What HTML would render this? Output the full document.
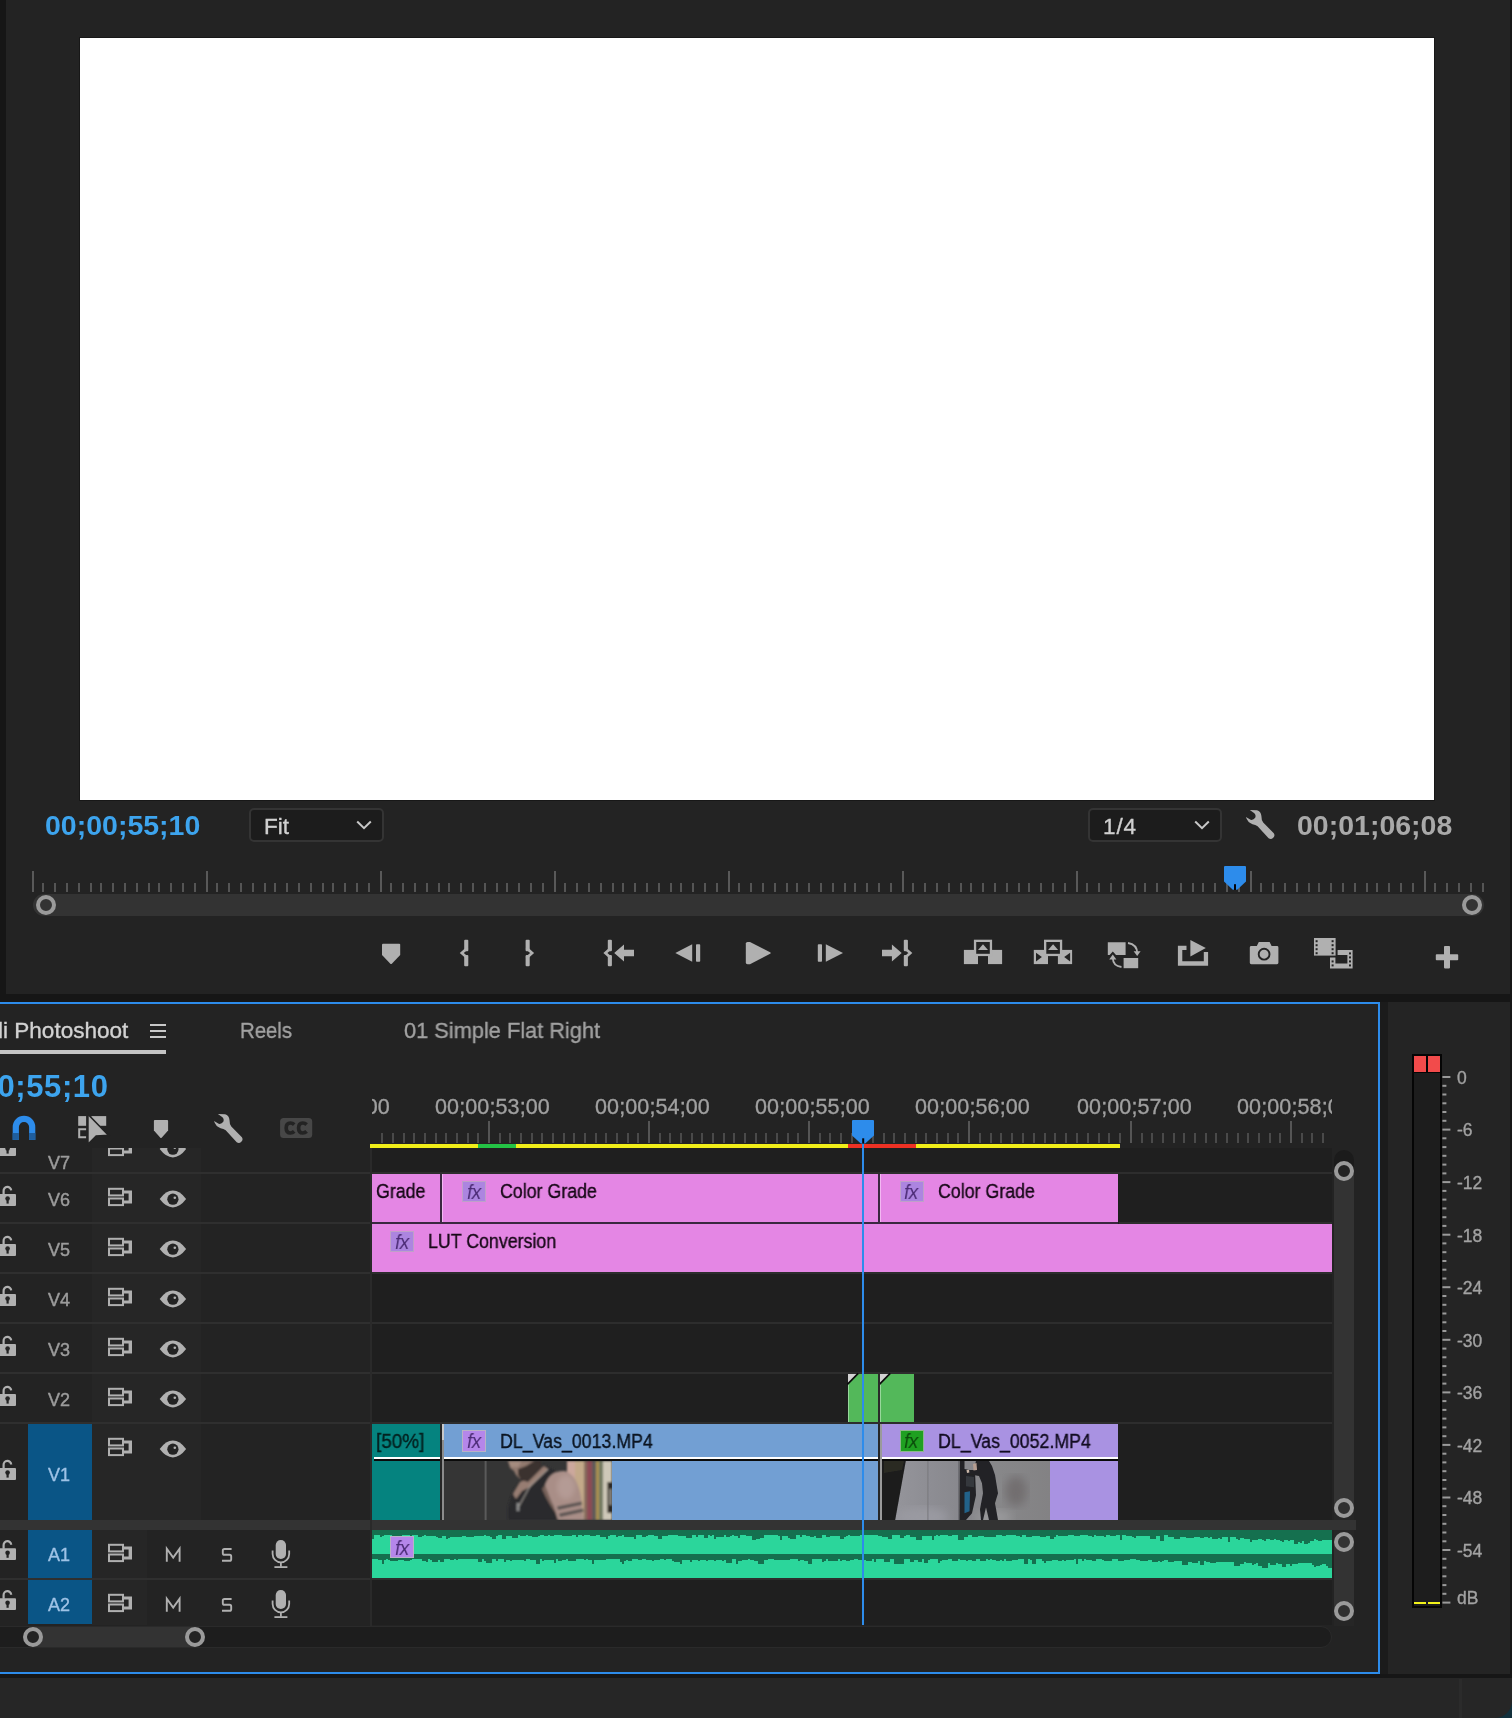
<!DOCTYPE html>
<html><head><meta charset="utf-8"><title>Premiere</title>
<style>
*{box-sizing:border-box;margin:0;padding:0}
html,body{width:1512px;height:1718px;overflow:hidden;background:#161616;font-family:"Liberation Sans",sans-serif;}
.a{position:absolute}
.t{position:absolute;white-space:nowrap;line-height:1;transform-origin:0 0;will-change:transform;-webkit-text-stroke-width:0.35px}
svg{position:absolute;overflow:visible}
</style></head><body>
<div class="a" style="left:0;top:0;width:1512px;height:1718px;background:#161616;overflow:hidden"><div class="a" style="left:1490px;top:1696px;width:22px;height:22px;background:#12303c"></div>

<div class="a" id="mon" style="left:6px;top:0;width:1504px;height:994px;background:#232323"></div>
<div class="a" style="left:80px;top:38px;width:1354px;height:762px;background:#fff;box-shadow:0 0 0 1px #171717"></div>
<div class="t" id="tcL" style="left:45px;top:811px;font-size:28.5px;color:#3da4ee;font-weight:bold;-webkit-text-stroke-width:0">00;00;55;10</div><div class="t" id="tcR" style="left:1297px;top:811px;font-size:28.5px;color:#a9a9a9;font-weight:bold;-webkit-text-stroke-width:0">00;01;06;08</div><div class="a" style="left:249.4px;top:808.4px;width:134.4px;height:33.6px;border:2px solid #343434;border-radius:5px;background:#1c1c1c"></div><div class="t" style="left:264px;top:815.6px;font-size:22.5px;color:#d0d0d0;letter-spacing:0px">Fit</div><svg style="left:356.4px;top:820.2px" width="16" height="10"><path d="M1.2 1.5 L8 8.2 L14.8 1.5" fill="none" stroke="#c8c8c8" stroke-width="2"/></svg><div class="a" style="left:1088.4px;top:808.4px;width:133.4px;height:33.6px;border:2px solid #343434;border-radius:5px;background:#1c1c1c"></div><div class="t" style="left:1103px;top:815.6px;font-size:22.5px;color:#d0d0d0;letter-spacing:0.9px">1/4</div><svg style="left:1194.4px;top:820.2px" width="16" height="10"><path d="M1.2 1.5 L8 8.2 L14.8 1.5" fill="none" stroke="#c8c8c8" stroke-width="2"/></svg><svg style="left:0;top:0" width="1512" height="1000" shape-rendering="crispEdges"><rect x="32" y="871" width="2" height="21" fill="#595959"/><rect x="42" y="882.5" width="2" height="9.5" fill="#555"/><rect x="54" y="882.5" width="2" height="9.5" fill="#555"/><rect x="66" y="882.5" width="2" height="9.5" fill="#555"/><rect x="78" y="882.5" width="2" height="9.5" fill="#555"/><rect x="90" y="882.5" width="2" height="9.5" fill="#555"/><rect x="100" y="882.5" width="2" height="9.5" fill="#555"/><rect x="112" y="882.5" width="2" height="9.5" fill="#555"/><rect x="124" y="882.5" width="2" height="9.5" fill="#555"/><rect x="136" y="882.5" width="2" height="9.5" fill="#555"/><rect x="148" y="882.5" width="2" height="9.5" fill="#555"/><rect x="158" y="882.5" width="2" height="9.5" fill="#555"/><rect x="170" y="882.5" width="2" height="9.5" fill="#555"/><rect x="182" y="882.5" width="2" height="9.5" fill="#555"/><rect x="194" y="882.5" width="2" height="9.5" fill="#555"/><rect x="206" y="871" width="2" height="21" fill="#595959"/><rect x="216" y="882.5" width="2" height="9.5" fill="#555"/><rect x="228" y="882.5" width="2" height="9.5" fill="#555"/><rect x="240" y="882.5" width="2" height="9.5" fill="#555"/><rect x="252" y="882.5" width="2" height="9.5" fill="#555"/><rect x="264" y="882.5" width="2" height="9.5" fill="#555"/><rect x="274" y="882.5" width="2" height="9.5" fill="#555"/><rect x="286" y="882.5" width="2" height="9.5" fill="#555"/><rect x="298" y="882.5" width="2" height="9.5" fill="#555"/><rect x="310" y="882.5" width="2" height="9.5" fill="#555"/><rect x="322" y="882.5" width="2" height="9.5" fill="#555"/><rect x="332" y="882.5" width="2" height="9.5" fill="#555"/><rect x="344" y="882.5" width="2" height="9.5" fill="#555"/><rect x="356" y="882.5" width="2" height="9.5" fill="#555"/><rect x="368" y="882.5" width="2" height="9.5" fill="#555"/><rect x="380" y="871" width="2" height="21" fill="#595959"/><rect x="390" y="882.5" width="2" height="9.5" fill="#555"/><rect x="402" y="882.5" width="2" height="9.5" fill="#555"/><rect x="414" y="882.5" width="2" height="9.5" fill="#555"/><rect x="426" y="882.5" width="2" height="9.5" fill="#555"/><rect x="438" y="882.5" width="2" height="9.5" fill="#555"/><rect x="448" y="882.5" width="2" height="9.5" fill="#555"/><rect x="460" y="882.5" width="2" height="9.5" fill="#555"/><rect x="472" y="882.5" width="2" height="9.5" fill="#555"/><rect x="484" y="882.5" width="2" height="9.5" fill="#555"/><rect x="496" y="882.5" width="2" height="9.5" fill="#555"/><rect x="506" y="882.5" width="2" height="9.5" fill="#555"/><rect x="518" y="882.5" width="2" height="9.5" fill="#555"/><rect x="530" y="882.5" width="2" height="9.5" fill="#555"/><rect x="542" y="882.5" width="2" height="9.5" fill="#555"/><rect x="554" y="871" width="2" height="21" fill="#595959"/><rect x="564" y="882.5" width="2" height="9.5" fill="#555"/><rect x="576" y="882.5" width="2" height="9.5" fill="#555"/><rect x="588" y="882.5" width="2" height="9.5" fill="#555"/><rect x="600" y="882.5" width="2" height="9.5" fill="#555"/><rect x="612" y="882.5" width="2" height="9.5" fill="#555"/><rect x="622" y="882.5" width="2" height="9.5" fill="#555"/><rect x="634" y="882.5" width="2" height="9.5" fill="#555"/><rect x="646" y="882.5" width="2" height="9.5" fill="#555"/><rect x="658" y="882.5" width="2" height="9.5" fill="#555"/><rect x="670" y="882.5" width="2" height="9.5" fill="#555"/><rect x="680" y="882.5" width="2" height="9.5" fill="#555"/><rect x="692" y="882.5" width="2" height="9.5" fill="#555"/><rect x="704" y="882.5" width="2" height="9.5" fill="#555"/><rect x="716" y="882.5" width="2" height="9.5" fill="#555"/><rect x="728" y="871" width="2" height="21" fill="#595959"/><rect x="738" y="882.5" width="2" height="9.5" fill="#555"/><rect x="750" y="882.5" width="2" height="9.5" fill="#555"/><rect x="762" y="882.5" width="2" height="9.5" fill="#555"/><rect x="774" y="882.5" width="2" height="9.5" fill="#555"/><rect x="786" y="882.5" width="2" height="9.5" fill="#555"/><rect x="796" y="882.5" width="2" height="9.5" fill="#555"/><rect x="808" y="882.5" width="2" height="9.5" fill="#555"/><rect x="820" y="882.5" width="2" height="9.5" fill="#555"/><rect x="832" y="882.5" width="2" height="9.5" fill="#555"/><rect x="844" y="882.5" width="2" height="9.5" fill="#555"/><rect x="854" y="882.5" width="2" height="9.5" fill="#555"/><rect x="866" y="882.5" width="2" height="9.5" fill="#555"/><rect x="878" y="882.5" width="2" height="9.5" fill="#555"/><rect x="890" y="882.5" width="2" height="9.5" fill="#555"/><rect x="902" y="871" width="2" height="21" fill="#595959"/><rect x="912" y="882.5" width="2" height="9.5" fill="#555"/><rect x="924" y="882.5" width="2" height="9.5" fill="#555"/><rect x="936" y="882.5" width="2" height="9.5" fill="#555"/><rect x="948" y="882.5" width="2" height="9.5" fill="#555"/><rect x="960" y="882.5" width="2" height="9.5" fill="#555"/><rect x="970" y="882.5" width="2" height="9.5" fill="#555"/><rect x="982" y="882.5" width="2" height="9.5" fill="#555"/><rect x="994" y="882.5" width="2" height="9.5" fill="#555"/><rect x="1006" y="882.5" width="2" height="9.5" fill="#555"/><rect x="1018" y="882.5" width="2" height="9.5" fill="#555"/><rect x="1028" y="882.5" width="2" height="9.5" fill="#555"/><rect x="1040" y="882.5" width="2" height="9.5" fill="#555"/><rect x="1052" y="882.5" width="2" height="9.5" fill="#555"/><rect x="1064" y="882.5" width="2" height="9.5" fill="#555"/><rect x="1076" y="871" width="2" height="21" fill="#595959"/><rect x="1086" y="882.5" width="2" height="9.5" fill="#555"/><rect x="1098" y="882.5" width="2" height="9.5" fill="#555"/><rect x="1110" y="882.5" width="2" height="9.5" fill="#555"/><rect x="1122" y="882.5" width="2" height="9.5" fill="#555"/><rect x="1134" y="882.5" width="2" height="9.5" fill="#555"/><rect x="1144" y="882.5" width="2" height="9.5" fill="#555"/><rect x="1156" y="882.5" width="2" height="9.5" fill="#555"/><rect x="1168" y="882.5" width="2" height="9.5" fill="#555"/><rect x="1180" y="882.5" width="2" height="9.5" fill="#555"/><rect x="1192" y="882.5" width="2" height="9.5" fill="#555"/><rect x="1202" y="882.5" width="2" height="9.5" fill="#555"/><rect x="1214" y="882.5" width="2" height="9.5" fill="#555"/><rect x="1226" y="882.5" width="2" height="9.5" fill="#555"/><rect x="1238" y="882.5" width="2" height="9.5" fill="#555"/><rect x="1250" y="871" width="2" height="21" fill="#595959"/><rect x="1260" y="882.5" width="2" height="9.5" fill="#555"/><rect x="1272" y="882.5" width="2" height="9.5" fill="#555"/><rect x="1284" y="882.5" width="2" height="9.5" fill="#555"/><rect x="1296" y="882.5" width="2" height="9.5" fill="#555"/><rect x="1308" y="882.5" width="2" height="9.5" fill="#555"/><rect x="1318" y="882.5" width="2" height="9.5" fill="#555"/><rect x="1330" y="882.5" width="2" height="9.5" fill="#555"/><rect x="1342" y="882.5" width="2" height="9.5" fill="#555"/><rect x="1354" y="882.5" width="2" height="9.5" fill="#555"/><rect x="1366" y="882.5" width="2" height="9.5" fill="#555"/><rect x="1376" y="882.5" width="2" height="9.5" fill="#555"/><rect x="1388" y="882.5" width="2" height="9.5" fill="#555"/><rect x="1400" y="882.5" width="2" height="9.5" fill="#555"/><rect x="1412" y="882.5" width="2" height="9.5" fill="#555"/><rect x="1424" y="871" width="2" height="21" fill="#595959"/><rect x="1434" y="882.5" width="2" height="9.5" fill="#555"/><rect x="1446" y="882.5" width="2" height="9.5" fill="#555"/><rect x="1458" y="882.5" width="2" height="9.5" fill="#555"/><rect x="1470" y="882.5" width="2" height="9.5" fill="#555"/><rect x="1482" y="882.5" width="2" height="9.5" fill="#555"/></svg><div class="a" style="left:33px;top:894px;width:1451px;height:22px;background:#333;border-radius:11px 11px 11px 11px"></div><div class="a" style="left:36px;top:895.0px;width:20.4px;height:20.4px;border-radius:50%;border:4.4px solid #9a9a9a;background:#333"></div><div class="a" style="left:1461.5px;top:895.0px;width:20.4px;height:20.4px;border-radius:50%;border:4.4px solid #9a9a9a;background:#333"></div><svg style="left:1224px;top:866px" width="24" height="28"><path d="M0 1 Q0 0 1 0 H21 Q22 0 22 1 V15.6 L13.2 23.8 H8.8 L0 15.6 Z" fill="#2d8ceb"/><rect x="10" y="18.2" width="2" height="5.8" fill="#05050a"/></svg><svg style="left:0;top:0" width="1512" height="1000"><g fill="#b0b0b0" stroke="none"><path d="M383 943.8 H399.2 Q400.2 943.8 400.2 944.8 V955 L391.6 963.9 H390.6 L382 955 V944.8 Q382 943.8 383 943.8 Z"/><rect x="464.2" y="939.8" width="4.1" height="11.4" rx="1"/><rect x="464.2" y="955" width="4.1" height="11.2" rx="1"/><path d="M467.4 948 L461.79999999999995 953 L467.4 958" fill="none" stroke="#b0b0b0" stroke-width="2.7"/><rect x="525.6" y="939.8" width="4.1" height="11.4" rx="1"/><rect x="525.6" y="955" width="4.1" height="11.2" rx="1"/><path d="M526.5 948 L532.1 953 L526.5 958" fill="none" stroke="#b0b0b0" stroke-width="2.7"/><rect x="607.8" y="939.8" width="4.1" height="11.4" rx="1"/><rect x="607.8" y="955" width="4.1" height="11.2" rx="1"/><path d="M611 948 L605.4 953 L611 958" fill="none" stroke="#b0b0b0" stroke-width="2.7"/><path d="M614.2 953 L624 944.4 V949.8 H634 V956.2 H624 V961.6 Z"/><path d="M675.3 953 L692.2 944.3 V961.8 Z"/><rect x="696" y="944.3" width="4.2" height="17.5" rx="0.8"/><path d="M747.5 942 Q745.8 942 745.8 943.5 V962.6 Q745.8 964.2 747.5 964.2 H750 L770.6 953.6 V952.6 L750 942 Z"/><rect x="817.8" y="944.3" width="4.2" height="17.5" rx="0.8"/><path d="M825.8 944.3 L843 953 L825.8 961.8 Z"/><path d="M901.7 953 L891.9 944.4 V949.8 H882 V956.2 H891.9 V961.6 Z"/><rect x="903.8000000000001" y="939.8" width="4.1" height="11.4" rx="1"/><rect x="903.8000000000001" y="955" width="4.1" height="11.2" rx="1"/><path d="M904.7 948 L910.3000000000001 953 L904.7 958" fill="none" stroke="#b0b0b0" stroke-width="2.7"/><rect x="963.9" y="949.9" width="14.1" height="14.2"/><rect x="988" y="949.9" width="14.1" height="14.2"/><rect x="975.05" y="940.85" width="15.9" height="14.1" fill="#232323" stroke="#b0b0b0" stroke-width="2.3"/><path d="M983 944.3 L988 950 H978 Z"/><rect x="1033.8" y="949.9" width="14.2" height="14.2"/><rect x="1057.9" y="949.9" width="14.2" height="14.2"/><path d="M1036 952.8 L1041.9 957.1 L1036 961.4 Z" fill="#232323"/><path d="M1070.1 952.8 L1064.2 957.1 L1070.1 961.4 Z" fill="#232323"/><rect x="1045.15" y="940.85" width="15.9" height="14.1" fill="#232323" stroke="#b0b0b0" stroke-width="2.3"/><path d="M1053.1 944.3 L1058.1 950 H1048.1 Z"/><path d="M1107.8 942.2 H1125.6 V955 H1116 L1112.8 951.5 L1109.6 955 H1107.8 Z"/><rect x="1123.6" y="958" width="14.6" height="10.2"/><path d="M1128 943 Q1137 944.5 1137.2 953" fill="none" stroke="#b0b0b0" stroke-width="1.8"/><path d="M1133.6 951.2 L1137.2 956 L1140.6 951.2 Z"/><path d="M1121.5 967 Q1113 966 1112.8 958" fill="none" stroke="#b0b0b0" stroke-width="1.8"/><path d="M1109.2 959.6 L1112.8 954.6 L1116.4 959.6 Z"/><path d="M1177.9 945.7 H1186.5 V950.1 H1182.3 V961.3 H1203.8 V952 H1208.1 V965.8 H1177.9 Z"/><path d="M1190.4 940 L1205.8 948 L1190.4 956.4 Z"/><path d="M1251.3 946 H1256.8 L1258.8 942 H1269.6 L1271.6 946 H1277 Q1278.4 946 1278.4 947.4 V962.8 Q1278.4 964.2 1277 964.2 H1251.3 Q1249.8 964.2 1249.8 962.8 V947.4 Q1249.8 946 1251.3 946 Z"/><circle cx="1264.1" cy="954.2" r="5.4" fill="#b0b0b0" stroke="#232323" stroke-width="1.9"/><rect x="1314" y="938" width="21.6" height="17.6"/><g fill="#232323"><rect x="1315.6" y="940.2" width="2" height="2"/><rect x="1331.6" y="940.2" width="2" height="2"/><rect x="1315.6" y="944.2" width="2" height="2"/><rect x="1331.6" y="944.2" width="2" height="2"/><rect x="1315.6" y="948.2" width="2" height="2"/><rect x="1331.6" y="948.2" width="2" height="2"/><rect x="1315.6" y="952.2" width="2" height="2"/><rect x="1331.6" y="952.2" width="2" height="2"/></g><path d="M1337.6 950 H1352.6 V968.4 H1330 V957.6 H1335.4 V963.4 H1347.4 V955 H1337.6 Z"/><g fill="#232323"><rect x="1349" y="952.4" width="2" height="2"/><rect x="1349" y="956.4" width="2" height="2"/><rect x="1349" y="960.4" width="2" height="2"/><rect x="1349" y="964.4" width="2" height="2"/><rect x="1331.6" y="960.4" width="2" height="2"/><rect x="1331.6" y="964.4" width="2" height="2"/></g><rect x="1435.8" y="954.2" width="22.4" height="6" rx="0.8"/><rect x="1444" y="946" width="6" height="22.4" rx="0.8"/></g></svg><svg style="left:0;top:0" width="1512" height="900"><path d="M1249.8 810.1 L1257 810.2 Q1261 811.5 1261.4 816 Q1261.4 820.5 1263.2 822.4 L1273.8 833.2 Q1275.4 835.6 1273.2 837.8 Q1271 840 1268.6 838.2 L1257.6 826.2 Q1255.5 824.6 1252.5 824.3 Q1247.5 822.5 1245.9 817.1 L1250.6 819.8 Q1253.5 820.3 1255.2 817.8 Q1256.4 815 1254 813 Z" fill="#b0b0b0"/></svg><div class="a" style="left:0;top:1002px;width:1380px;height:672px;background:#232323;border:2px solid #2d8ceb;border-left:none"></div><div class="a" style="left:1380px;top:1002px;width:8px;height:672px;background:#1b1b1b"></div><div class="a" style="left:1388px;top:1002px;width:122px;height:672px;background:#242424"></div><div class="a" style="left:0;top:1678px;width:1512px;height:40px;background:#262626;border-bottom-right-radius:17px"></div><div class="a" style="left:1459.2px;top:1679px;width:2.4px;height:39px;background:#2b2b2b"></div><div class="t" style="left:-2px;top:1019.8px;font-size:22px;color:#d2d2d2;transform:scaleX(1.025)">li Photoshoot</div><div class="a" style="left:0;top:1050px;width:166px;height:4px;background:#c4c4c4"></div><div class="a" style="left:150px;top:1024px;width:16px;height:2px;background:#c8c8c8"></div><div class="a" style="left:150px;top:1030px;width:16px;height:2px;background:#c8c8c8"></div><div class="a" style="left:150px;top:1036px;width:16px;height:2px;background:#c8c8c8"></div><div class="t" style="left:240px;top:1019.8px;font-size:22px;color:#a2a2a2;transform:scaleX(0.925)">Reels</div><div class="t" style="left:404px;top:1019.8px;font-size:22px;color:#a2a2a2;transform:scaleX(0.99)">01 Simple Flat Right</div><div class="t" style="left:-67px;top:1071.2px;font-size:31px;letter-spacing:0.6px;color:#3da4ee;font-weight:bold;-webkit-text-stroke-width:0">00;00;55;10</div><svg style="left:0;top:0" width="400" height="1718"><path d="M12.7 1139.9 V1127 A11.3 11.3 0 0 1 35.3 1127 V1139.9 H29.1 V1127 A5.1 5.1 0 0 0 18.9 1127 V1139.9 Z" fill="#2d8ceb"/><rect x="12.7" y="1133" width="6.2" height="6.9" fill="#1f5e9e"/><rect x="29.1" y="1133" width="6.2" height="6.9" fill="#1f5e9e"/><rect x="78.2" y="1116.1" width="7.9" height="9.7" fill="#b0b0b0"/><path d="M86.1 1129.2 H79.2 V1137.2 H86.1" fill="none" stroke="#b0b0b0" stroke-width="2"/><rect x="91.3" y="1116.1" width="14.9" height="9.7" fill="#b0b0b0"/><path d="M87.9 1114.3 V1144.4 L96.2 1136 L108.4 1135.2 Z" fill="#b0b0b0" stroke="#232323" stroke-width="1.6"/><rect x="84" y="1112" width="3.2" height="32" fill="#232323" opacity="0"/><path d="M154.8 1120 H167.2 Q168.1 1120 168.1 1121 V1130.5 L161.4 1138 H160.6 L153.9 1130.5 V1121 Q153.9 1120 154.8 1120 Z" fill="#b0b0b0"/><path d="M1249.8 810.1 L1257 810.2 Q1261 811.5 1261.4 816 Q1261.4 820.5 1263.2 822.4 L1273.8 833.2 Q1275.4 835.6 1273.2 837.8 Q1271 840 1268.6 838.2 L1257.6 826.2 Q1255.5 824.6 1252.5 824.3 Q1247.5 822.5 1245.9 817.1 L1250.6 819.8 Q1253.5 820.3 1255.2 817.8 Q1256.4 815 1254 813 Z" fill="#b0b0b0" transform="translate(-1031.9 304)"/><rect x="280.1" y="1117.9" width="32.1" height="20.1" rx="3.5" fill="#474747"/><path d="M294.2 1124.6 Q292.6 1123 290.4 1123 Q286.2 1123 286.2 1128 Q286.2 1133 290.4 1133 Q292.6 1133 294.2 1131.4" fill="none" stroke="#232323" stroke-width="3.7"/><path d="M306.6 1124.6 Q305 1123 302.8 1123 Q298.6 1123 298.6 1128 Q298.6 1133 302.8 1133 Q305 1133 306.6 1131.4" fill="none" stroke="#232323" stroke-width="3.7"/></svg><div class="a" style="left:92px;top:1148px;width:109px;height:373px;background:#262626"></div><div class="a" style="left:92px;top:1530px;width:55px;height:95px;background:#262626"></div><div class="a" style="left:0;top:1148px;width:372px;height:24px;overflow:hidden"><svg style="left:0;top:-1148px" width="372" height="1718"><rect x="-1" y="1144.0" width="17" height="11.9" rx="1" fill="#b0b0b0"/><path d="M3.6 1144.5 V1141.0 A3.8 3.8 0 0 1 11.2 1140.4" fill="none" stroke="#b0b0b0" stroke-width="2.2"/><circle cx="7.6" cy="1148.5" r="2.3" fill="#232323"/><rect x="6.5" y="1149.0" width="2.2" height="4.6" fill="#232323"/><rect x="109" y="1138.8" width="14" height="6.6" fill="none" stroke="#b0b0b0" stroke-width="2"/><rect x="109" y="1148.5" width="14" height="6.6" fill="none" stroke="#b0b0b0" stroke-width="2"/><path d="M124 1140.4 H132 V1153.4 H124 V1150.4 H128.6 V1143.4 H124 Z" fill="#b0b0b0"/><path d="M159.7 1149.0 Q166 1140.6 172.9 1140.6 Q179.8 1140.6 186.1 1149.0 Q179.8 1157.4 172.9 1157.4 Q166 1157.4 159.7 1149.0 Z" fill="#b0b0b0"/><circle cx="172.9" cy="1149.2" r="5.6" fill="#232323"/><circle cx="174.8" cy="1147.8" r="1.3" fill="#b0b0b0"/></svg><div class="t" style="left:48px;top:5.7px;font-size:18px;color:#9c9c9c;-webkit-text-stroke-width:0.45px">V7</div></div><div class="a" style="left:0;top:1172px;width:372px;height:2px;background:#2f2f2f"></div><div class="a" style="left:0;top:1222px;width:372px;height:2px;background:#2f2f2f"></div><div class="a" style="left:0;top:1272px;width:372px;height:2px;background:#2f2f2f"></div><div class="a" style="left:0;top:1322px;width:372px;height:2px;background:#2f2f2f"></div><div class="a" style="left:0;top:1372px;width:372px;height:2px;background:#2f2f2f"></div><div class="a" style="left:0;top:1422px;width:372px;height:2px;background:#2f2f2f"></div><svg style="left:0;top:0" width="372" height="1718"><rect x="-1" y="1194.0" width="17" height="11.9" rx="1" fill="#b0b0b0"/><path d="M3.6 1194.5 V1191.0 A3.8 3.8 0 0 1 11.2 1190.4" fill="none" stroke="#b0b0b0" stroke-width="2.2"/><circle cx="7.6" cy="1198.5" r="2.3" fill="#232323"/><rect x="6.5" y="1199.0" width="2.2" height="4.6" fill="#232323"/><rect x="109" y="1188.8" width="14" height="6.6" fill="none" stroke="#b0b0b0" stroke-width="2"/><rect x="109" y="1198.5" width="14" height="6.6" fill="none" stroke="#b0b0b0" stroke-width="2"/><path d="M124 1190.4 H132 V1203.4 H124 V1200.4 H128.6 V1193.4 H124 Z" fill="#b0b0b0"/><path d="M159.7 1199.0 Q166 1190.6 172.9 1190.6 Q179.8 1190.6 186.1 1199.0 Q179.8 1207.4 172.9 1207.4 Q166 1207.4 159.7 1199.0 Z" fill="#b0b0b0"/><circle cx="172.9" cy="1199.2" r="5.6" fill="#232323"/><circle cx="174.8" cy="1197.8" r="1.3" fill="#b0b0b0"/><rect x="-1" y="1244.0" width="17" height="11.9" rx="1" fill="#b0b0b0"/><path d="M3.6 1244.5 V1241.0 A3.8 3.8 0 0 1 11.2 1240.4" fill="none" stroke="#b0b0b0" stroke-width="2.2"/><circle cx="7.6" cy="1248.5" r="2.3" fill="#232323"/><rect x="6.5" y="1249.0" width="2.2" height="4.6" fill="#232323"/><rect x="109" y="1238.8" width="14" height="6.6" fill="none" stroke="#b0b0b0" stroke-width="2"/><rect x="109" y="1248.5" width="14" height="6.6" fill="none" stroke="#b0b0b0" stroke-width="2"/><path d="M124 1240.4 H132 V1253.4 H124 V1250.4 H128.6 V1243.4 H124 Z" fill="#b0b0b0"/><path d="M159.7 1249.0 Q166 1240.6 172.9 1240.6 Q179.8 1240.6 186.1 1249.0 Q179.8 1257.4 172.9 1257.4 Q166 1257.4 159.7 1249.0 Z" fill="#b0b0b0"/><circle cx="172.9" cy="1249.2" r="5.6" fill="#232323"/><circle cx="174.8" cy="1247.8" r="1.3" fill="#b0b0b0"/><rect x="-1" y="1294.0" width="17" height="11.9" rx="1" fill="#b0b0b0"/><path d="M3.6 1294.5 V1291.0 A3.8 3.8 0 0 1 11.2 1290.4" fill="none" stroke="#b0b0b0" stroke-width="2.2"/><circle cx="7.6" cy="1298.5" r="2.3" fill="#232323"/><rect x="6.5" y="1299.0" width="2.2" height="4.6" fill="#232323"/><rect x="109" y="1288.8" width="14" height="6.6" fill="none" stroke="#b0b0b0" stroke-width="2"/><rect x="109" y="1298.5" width="14" height="6.6" fill="none" stroke="#b0b0b0" stroke-width="2"/><path d="M124 1290.4 H132 V1303.4 H124 V1300.4 H128.6 V1293.4 H124 Z" fill="#b0b0b0"/><path d="M159.7 1299.0 Q166 1290.6 172.9 1290.6 Q179.8 1290.6 186.1 1299.0 Q179.8 1307.4 172.9 1307.4 Q166 1307.4 159.7 1299.0 Z" fill="#b0b0b0"/><circle cx="172.9" cy="1299.2" r="5.6" fill="#232323"/><circle cx="174.8" cy="1297.8" r="1.3" fill="#b0b0b0"/><rect x="-1" y="1344.0" width="17" height="11.9" rx="1" fill="#b0b0b0"/><path d="M3.6 1344.5 V1341.0 A3.8 3.8 0 0 1 11.2 1340.4" fill="none" stroke="#b0b0b0" stroke-width="2.2"/><circle cx="7.6" cy="1348.5" r="2.3" fill="#232323"/><rect x="6.5" y="1349.0" width="2.2" height="4.6" fill="#232323"/><rect x="109" y="1338.8" width="14" height="6.6" fill="none" stroke="#b0b0b0" stroke-width="2"/><rect x="109" y="1348.5" width="14" height="6.6" fill="none" stroke="#b0b0b0" stroke-width="2"/><path d="M124 1340.4 H132 V1353.4 H124 V1350.4 H128.6 V1343.4 H124 Z" fill="#b0b0b0"/><path d="M159.7 1349.0 Q166 1340.6 172.9 1340.6 Q179.8 1340.6 186.1 1349.0 Q179.8 1357.4 172.9 1357.4 Q166 1357.4 159.7 1349.0 Z" fill="#b0b0b0"/><circle cx="172.9" cy="1349.2" r="5.6" fill="#232323"/><circle cx="174.8" cy="1347.8" r="1.3" fill="#b0b0b0"/><rect x="-1" y="1394.0" width="17" height="11.9" rx="1" fill="#b0b0b0"/><path d="M3.6 1394.5 V1391.0 A3.8 3.8 0 0 1 11.2 1390.4" fill="none" stroke="#b0b0b0" stroke-width="2.2"/><circle cx="7.6" cy="1398.5" r="2.3" fill="#232323"/><rect x="6.5" y="1399.0" width="2.2" height="4.6" fill="#232323"/><rect x="109" y="1388.8" width="14" height="6.6" fill="none" stroke="#b0b0b0" stroke-width="2"/><rect x="109" y="1398.5" width="14" height="6.6" fill="none" stroke="#b0b0b0" stroke-width="2"/><path d="M124 1390.4 H132 V1403.4 H124 V1400.4 H128.6 V1393.4 H124 Z" fill="#b0b0b0"/><path d="M159.7 1399.0 Q166 1390.6 172.9 1390.6 Q179.8 1390.6 186.1 1399.0 Q179.8 1407.4 172.9 1407.4 Q166 1407.4 159.7 1399.0 Z" fill="#b0b0b0"/><circle cx="172.9" cy="1399.2" r="5.6" fill="#232323"/><circle cx="174.8" cy="1397.8" r="1.3" fill="#b0b0b0"/><rect x="-1" y="1468.0" width="17" height="11.9" rx="1" fill="#b0b0b0"/><path d="M3.6 1468.5 V1465.0 A3.8 3.8 0 0 1 11.2 1464.5" fill="none" stroke="#b0b0b0" stroke-width="2.2"/><circle cx="7.6" cy="1472.6" r="2.3" fill="#232323"/><rect x="6.5" y="1473.0" width="2.2" height="4.6" fill="#232323"/><rect x="109" y="1438.8" width="14" height="6.6" fill="none" stroke="#b0b0b0" stroke-width="2"/><rect x="109" y="1448.5" width="14" height="6.6" fill="none" stroke="#b0b0b0" stroke-width="2"/><path d="M124 1440.4 H132 V1453.4 H124 V1450.4 H128.6 V1443.4 H124 Z" fill="#b0b0b0"/><path d="M159.7 1449.0 Q166 1440.6 172.9 1440.6 Q179.8 1440.6 186.1 1449.0 Q179.8 1457.4 172.9 1457.4 Q166 1457.4 159.7 1449.0 Z" fill="#b0b0b0"/><circle cx="172.9" cy="1449.2" r="5.6" fill="#232323"/><circle cx="174.8" cy="1447.8" r="1.3" fill="#b0b0b0"/><rect x="-1" y="1548.2" width="17" height="11.9" rx="1" fill="#b0b0b0"/><path d="M3.6 1548.8 V1545.2 A3.8 3.8 0 0 1 11.2 1544.7" fill="none" stroke="#b0b0b0" stroke-width="2.2"/><circle cx="7.6" cy="1552.8" r="2.3" fill="#232323"/><rect x="6.5" y="1553.2" width="2.2" height="4.6" fill="#232323"/><rect x="109" y="1544.8" width="14" height="6.6" fill="none" stroke="#b0b0b0" stroke-width="2"/><rect x="109" y="1554.5" width="14" height="6.6" fill="none" stroke="#b0b0b0" stroke-width="2"/><path d="M124 1546.4 H132 V1559.4 H124 V1556.4 H128.6 V1549.4 H124 Z" fill="#b0b0b0"/><rect x="-1" y="1598.2" width="17" height="11.9" rx="1" fill="#b0b0b0"/><path d="M3.6 1598.8 V1595.2 A3.8 3.8 0 0 1 11.2 1594.7" fill="none" stroke="#b0b0b0" stroke-width="2.2"/><circle cx="7.6" cy="1602.8" r="2.3" fill="#232323"/><rect x="6.5" y="1603.2" width="2.2" height="4.6" fill="#232323"/><rect x="109" y="1594.8" width="14" height="6.6" fill="none" stroke="#b0b0b0" stroke-width="2"/><rect x="109" y="1604.5" width="14" height="6.6" fill="none" stroke="#b0b0b0" stroke-width="2"/><path d="M124 1596.4 H132 V1609.4 H124 V1606.4 H128.6 V1599.4 H124 Z" fill="#b0b0b0"/></svg><div class="t" style="left:48px;top:1190.7px;font-size:18px;color:#9c9c9c;-webkit-text-stroke-width:0.45px">V6</div><div class="t" style="left:48px;top:1240.7px;font-size:18px;color:#9c9c9c;-webkit-text-stroke-width:0.45px">V5</div><div class="t" style="left:48px;top:1290.7px;font-size:18px;color:#9c9c9c;-webkit-text-stroke-width:0.45px">V4</div><div class="t" style="left:48px;top:1340.7px;font-size:18px;color:#9c9c9c;-webkit-text-stroke-width:0.45px">V3</div><div class="t" style="left:48px;top:1390.7px;font-size:18px;color:#9c9c9c;-webkit-text-stroke-width:0.45px">V2</div><div class="a" style="left:28px;top:1424px;width:64px;height:96px;background:#0a5586"></div><div class="t" style="left:48px;top:1465.5px;font-size:18px;color:#9fc3e6">V1</div><div class="a" style="left:0;top:1520px;width:1356px;height:10px;background:#333"></div><div class="a" style="left:28px;top:1530px;width:64px;height:48px;background:#0a5586"></div><div class="a" style="left:28px;top:1580px;width:64px;height:44px;background:#0a5586"></div><div class="a" style="left:0;top:1578px;width:372px;height:2px;background:#2f2f2f"></div><div class="t" style="left:48px;top:1546.3px;font-size:18px;color:#9fc3e6">A1</div><div class="t" style="left:48px;top:1596.3px;font-size:18px;color:#9fc3e6">A2</div><svg style="left:0;top:0" width="372" height="1718"><path d="M166.8 1561.8 V1548.6 L173.2 1557.5 L179.6 1548.6 V1561.8" fill="none" stroke="#b0b0b0" stroke-width="1.9" stroke-linejoin="miter"/><path d="M231.6 1549 H224.5 Q222.8 1549 222.8 1550.6 V1553.2 Q222.8 1554.8 224.5 1554.8 H229.6 Q231.2 1554.8 231.2 1556.4 V1559.2 Q231.2 1560.8 229.6 1560.8 H222" fill="none" stroke="#b0b0b0" stroke-width="1.9"/><rect x="275.7" y="1540" width="10.3" height="19" rx="5.1" fill="#b0b0b0"/><path d="M272.6 1550.5 V1554 A8.3 8.3 0 0 0 289.2 1554 V1550.5" fill="none" stroke="#b0b0b0" stroke-width="1.8"/><rect x="280" y="1562" width="1.8" height="4.8" fill="#b0b0b0"/><rect x="274.4" y="1566.2" width="13" height="1.8" fill="#b0b0b0"/><path d="M166.8 1611.8 V1598.6 L173.2 1607.5 L179.6 1598.6 V1611.8" fill="none" stroke="#b0b0b0" stroke-width="1.9" stroke-linejoin="miter"/><path d="M231.6 1599 H224.5 Q222.8 1599 222.8 1600.6 V1603.2 Q222.8 1604.8 224.5 1604.8 H229.6 Q231.2 1604.8 231.2 1606.4 V1609.2 Q231.2 1610.8 229.6 1610.8 H222" fill="none" stroke="#b0b0b0" stroke-width="1.9"/><rect x="275.7" y="1590" width="10.3" height="19" rx="5.1" fill="#b0b0b0"/><path d="M272.6 1600.5 V1604 A8.3 8.3 0 0 0 289.2 1604 V1600.5" fill="none" stroke="#b0b0b0" stroke-width="1.8"/><rect x="280" y="1612" width="1.8" height="4.8" fill="#b0b0b0"/><rect x="274.4" y="1616.2" width="13" height="1.8" fill="#b0b0b0"/></svg><div class="a" style="left:372px;top:1090px;width:960px;height:58px;overflow:hidden"><div class="t" style="left:-97.25px;top:6.9px;font-size:21.5px;letter-spacing:0.12px;color:#a0a0a0">00;00;52;00</div><div class="t" style="left:62.75px;top:6.9px;font-size:21.5px;letter-spacing:0.12px;color:#a0a0a0">00;00;53;00</div><div class="t" style="left:222.75px;top:6.9px;font-size:21.5px;letter-spacing:0.12px;color:#a0a0a0">00;00;54;00</div><div class="t" style="left:382.75px;top:6.9px;font-size:21.5px;letter-spacing:0.12px;color:#a0a0a0">00;00;55;00</div><div class="t" style="left:542.75px;top:6.9px;font-size:21.5px;letter-spacing:0.12px;color:#a0a0a0">00;00;56;00</div><div class="t" style="left:704.75px;top:6.9px;font-size:21.5px;letter-spacing:0.12px;color:#a0a0a0">00;00;57;00</div><div class="t" style="left:864.75px;top:6.9px;font-size:21.5px;letter-spacing:0.12px;color:#a0a0a0">00;00;58;00</div><svg style="left:0;top:0" width="960" height="58" shape-rendering="crispEdges"><rect x="9" y="43" width="2" height="10" fill="#4a4a4a"/><rect x="20" y="43" width="2" height="10" fill="#4a4a4a"/><rect x="31" y="43" width="2" height="10" fill="#4a4a4a"/><rect x="41" y="43" width="2" height="10" fill="#4a4a4a"/><rect x="52" y="43" width="2" height="10" fill="#4a4a4a"/><rect x="63" y="43" width="2" height="10" fill="#4a4a4a"/><rect x="73" y="43" width="2" height="10" fill="#4a4a4a"/><rect x="84" y="43" width="2" height="10" fill="#4a4a4a"/><rect x="95" y="43" width="2" height="10" fill="#4a4a4a"/><rect x="105" y="43" width="2" height="10" fill="#4a4a4a"/><rect x="116" y="31" width="2" height="22" fill="#555"/><rect x="127" y="43" width="2" height="10" fill="#4a4a4a"/><rect x="137" y="43" width="2" height="10" fill="#4a4a4a"/><rect x="148" y="43" width="2" height="10" fill="#4a4a4a"/><rect x="159" y="43" width="2" height="10" fill="#4a4a4a"/><rect x="169" y="43" width="2" height="10" fill="#4a4a4a"/><rect x="180" y="43" width="2" height="10" fill="#4a4a4a"/><rect x="191" y="43" width="2" height="10" fill="#4a4a4a"/><rect x="201" y="43" width="2" height="10" fill="#4a4a4a"/><rect x="212" y="43" width="2" height="10" fill="#4a4a4a"/><rect x="223" y="43" width="2" height="10" fill="#4a4a4a"/><rect x="233" y="43" width="2" height="10" fill="#4a4a4a"/><rect x="244" y="43" width="2" height="10" fill="#4a4a4a"/><rect x="255" y="43" width="2" height="10" fill="#4a4a4a"/><rect x="265" y="43" width="2" height="10" fill="#4a4a4a"/><rect x="276" y="31" width="2" height="22" fill="#555"/><rect x="287" y="43" width="2" height="10" fill="#4a4a4a"/><rect x="297" y="43" width="2" height="10" fill="#4a4a4a"/><rect x="308" y="43" width="2" height="10" fill="#4a4a4a"/><rect x="319" y="43" width="2" height="10" fill="#4a4a4a"/><rect x="329" y="43" width="2" height="10" fill="#4a4a4a"/><rect x="340" y="43" width="2" height="10" fill="#4a4a4a"/><rect x="351" y="43" width="2" height="10" fill="#4a4a4a"/><rect x="361" y="43" width="2" height="10" fill="#4a4a4a"/><rect x="372" y="43" width="2" height="10" fill="#4a4a4a"/><rect x="383" y="43" width="2" height="10" fill="#4a4a4a"/><rect x="393" y="43" width="2" height="10" fill="#4a4a4a"/><rect x="404" y="43" width="2" height="10" fill="#4a4a4a"/><rect x="415" y="43" width="2" height="10" fill="#4a4a4a"/><rect x="425" y="43" width="2" height="10" fill="#4a4a4a"/><rect x="436" y="31" width="2" height="22" fill="#555"/><rect x="447" y="43" width="2" height="10" fill="#4a4a4a"/><rect x="457" y="43" width="2" height="10" fill="#4a4a4a"/><rect x="468" y="43" width="2" height="10" fill="#4a4a4a"/><rect x="479" y="43" width="2" height="10" fill="#4a4a4a"/><rect x="489" y="43" width="2" height="10" fill="#4a4a4a"/><rect x="500" y="43" width="2" height="10" fill="#4a4a4a"/><rect x="511" y="43" width="2" height="10" fill="#4a4a4a"/><rect x="521" y="43" width="2" height="10" fill="#4a4a4a"/><rect x="532" y="43" width="2" height="10" fill="#4a4a4a"/><rect x="543" y="43" width="2" height="10" fill="#4a4a4a"/><rect x="553" y="43" width="2" height="10" fill="#4a4a4a"/><rect x="564" y="43" width="2" height="10" fill="#4a4a4a"/><rect x="575" y="43" width="2" height="10" fill="#4a4a4a"/><rect x="585" y="43" width="2" height="10" fill="#4a4a4a"/><rect x="596" y="31" width="2" height="22" fill="#555"/><rect x="607" y="43" width="2" height="10" fill="#4a4a4a"/><rect x="618" y="43" width="2" height="10" fill="#4a4a4a"/><rect x="628" y="43" width="2" height="10" fill="#4a4a4a"/><rect x="639" y="43" width="2" height="10" fill="#4a4a4a"/><rect x="650" y="43" width="2" height="10" fill="#4a4a4a"/><rect x="661" y="43" width="2" height="10" fill="#4a4a4a"/><rect x="672" y="43" width="2" height="10" fill="#4a4a4a"/><rect x="682" y="43" width="2" height="10" fill="#4a4a4a"/><rect x="693" y="43" width="2" height="10" fill="#4a4a4a"/><rect x="704" y="43" width="2" height="10" fill="#4a4a4a"/><rect x="715" y="43" width="2" height="10" fill="#4a4a4a"/><rect x="726" y="43" width="2" height="10" fill="#4a4a4a"/><rect x="736" y="43" width="2" height="10" fill="#4a4a4a"/><rect x="747" y="43" width="2" height="10" fill="#4a4a4a"/><rect x="758" y="31" width="2" height="22" fill="#555"/><rect x="769" y="43" width="2" height="10" fill="#4a4a4a"/><rect x="779" y="43" width="2" height="10" fill="#4a4a4a"/><rect x="790" y="43" width="2" height="10" fill="#4a4a4a"/><rect x="801" y="43" width="2" height="10" fill="#4a4a4a"/><rect x="811" y="43" width="2" height="10" fill="#4a4a4a"/><rect x="822" y="43" width="2" height="10" fill="#4a4a4a"/><rect x="833" y="43" width="2" height="10" fill="#4a4a4a"/><rect x="843" y="43" width="2" height="10" fill="#4a4a4a"/><rect x="854" y="43" width="2" height="10" fill="#4a4a4a"/><rect x="865" y="43" width="2" height="10" fill="#4a4a4a"/><rect x="875" y="43" width="2" height="10" fill="#4a4a4a"/><rect x="886" y="43" width="2" height="10" fill="#4a4a4a"/><rect x="897" y="43" width="2" height="10" fill="#4a4a4a"/><rect x="907" y="43" width="2" height="10" fill="#4a4a4a"/><rect x="918" y="31" width="2" height="22" fill="#555"/><rect x="929" y="43" width="2" height="10" fill="#4a4a4a"/><rect x="939" y="43" width="2" height="10" fill="#4a4a4a"/><rect x="950" y="43" width="2" height="10" fill="#4a4a4a"/></svg><div class="a" style="left:-2px;top:54px;width:750px;height:4px;background:#f0ee19"></div><div class="a" style="left:106px;top:54px;width:38px;height:4px;background:#24c245"></div><div class="a" style="left:476.2px;top:54px;width:67.5px;height:4px;background:#ee3124"></div></div><div class="a" style="left:370px;top:1144px;width:2px;height:4px;background:#f0ee19"></div><div class="a" style="left:370px;top:1148px;width:2px;height:478px;background:#2a2a2a"></div><div class="a" style="left:372px;top:1148px;width:960px;height:372px;background:#1f1f1f"></div><div class="a" style="left:372px;top:1530px;width:960px;height:95px;background:#1f1f1f"></div><div class="a" style="left:372px;top:1172px;width:960px;height:2px;background:#2d2d2d"></div><div class="a" style="left:372px;top:1222px;width:960px;height:2px;background:#2d2d2d"></div><div class="a" style="left:372px;top:1272px;width:960px;height:2px;background:#2d2d2d"></div><div class="a" style="left:372px;top:1322px;width:960px;height:2px;background:#2d2d2d"></div><div class="a" style="left:372px;top:1372px;width:960px;height:2px;background:#2d2d2d"></div><div class="a" style="left:372px;top:1422px;width:960px;height:2px;background:#2d2d2d"></div><div class="a" style="left:372px;top:1578px;width:960px;height:2px;background:#2d2d2d"></div><div class="a" style="left:372px;top:1174px;width:746px;height:49.8px;background:#3a2840"></div><div class="a" style="left:372px;top:1174px;width:68.1px;height:47.7px;background:#e486e4"></div><div class="a" style="left:442px;top:1174px;width:435.8px;height:47.7px;background:#e486e4;border-left:1.8px solid #f2b8f2"></div><div class="a" style="left:880px;top:1174px;width:238.2px;height:47.7px;background:#e486e4;border-left:1.8px solid #f2b8f2"></div><div class="a" style="left:1118.2px;top:1174px;width:1px;height:49.8px;background:#1f1f1f"></div><div class="t" style="left:376px;top:1182.3px;font-size:19.5px;color:#160816;transform:scaleX(0.912)">Grade</div><div class="a" style="left:462.4px;top:1180.5px;width:23.5px;height:21.5px;background:#ac85e0;border:1.8px solid #bfa0c8"></div><div class="t" style="left:466.79999999999995px;top:1180.7px;font-size:21px;font-style:italic;color:#4a2a74;transform:scaleX(0.9);letter-spacing:-0.6px;-webkit-text-stroke-width:0">fx</div><div class="t" style="left:499.8px;top:1182.3px;font-size:19.5px;color:#160816;transform:scaleX(0.912)">Color Grade</div><div class="a" style="left:900px;top:1180.5px;width:23.5px;height:21.5px;background:#ac85e0;border:1.8px solid #bfa0c8"></div><div class="t" style="left:904.4px;top:1180.7px;font-size:21px;font-style:italic;color:#4a2a74;transform:scaleX(0.9);letter-spacing:-0.6px;-webkit-text-stroke-width:0">fx</div><div class="t" style="left:937.5px;top:1182.3px;font-size:19.5px;color:#160816;transform:scaleX(0.912)">Color Grade</div><div class="a" style="left:372px;top:1224px;width:960px;height:47.8px;background:#e486e4"></div><div class="a" style="left:390.3px;top:1230.5px;width:23.5px;height:21.5px;background:#ac85e0;border:1.8px solid #bfa0c8"></div><div class="t" style="left:394.7px;top:1230.7px;font-size:21px;font-style:italic;color:#4a2a74;transform:scaleX(0.9);letter-spacing:-0.6px;-webkit-text-stroke-width:0">fx</div><div class="t" style="left:427.5px;top:1232.3px;font-size:19.5px;color:#160816;transform:scaleX(0.912)">LUT Conversion</div><div class="a" style="left:848px;top:1374px;width:30px;height:48px;background:#53b85a;border-left:1.6px solid #98d79b"></div><svg style="left:848px;top:1374px" width="12" height="12"><path d="M0 0 H9.6 L0 9.8 Z" fill="#d2d2d2"/><path d="M10.2 -0.6 L-0.6 10.4" stroke="#0a0a0a" stroke-width="1.7"/></svg><div class="a" style="left:880.1px;top:1374px;width:34.1px;height:48px;background:#53b85a;border-left:1.6px solid #98d79b"></div><svg style="left:880.1px;top:1374px" width="12" height="12"><path d="M0 0 H9.6 L0 9.8 Z" fill="#d2d2d2"/><path d="M10.2 -0.6 L-0.6 10.4" stroke="#0a0a0a" stroke-width="1.7"/></svg><div class="a" style="left:878px;top:1374px;width:2.1px;height:48px;background:#2a2a2a"></div><div class="a" style="left:372px;top:1424px;width:746.2px;height:96px;background:#262626"></div><div class="a" style="left:372px;top:1424px;width:68px;height:96px;background:#05837f"></div><div class="a" style="left:441.6px;top:1424px;width:2.4px;height:96px;background:#8c8c8c"></div><div class="a" style="left:441.6px;top:1424px;width:2.4px;height:16px;background:#c8c8c8"></div><div class="a" style="left:444px;top:1424px;width:433.8px;height:96px;background:#729fd3"></div><div class="a" style="left:879.6px;top:1424px;width:2.4px;height:96px;background:#9a9a9a"></div><div class="a" style="left:882px;top:1424px;width:236.2px;height:96px;background:#a992e2"></div><div class="a" style="left:374px;top:1457px;width:66px;height:2.2px;background:#fff"></div><div class="a" style="left:374px;top:1459.2px;width:66px;height:2px;background:#0a0a0a"></div><div class="a" style="left:444px;top:1457px;width:433.8px;height:2.2px;background:#fff"></div><div class="a" style="left:444px;top:1459.2px;width:433.8px;height:2px;background:#0a0a0a"></div><div class="a" style="left:882px;top:1457px;width:236.2px;height:2.2px;background:#fff"></div><div class="a" style="left:882px;top:1459.2px;width:236.2px;height:2px;background:#0a0a0a"></div><div class="t" style="left:376px;top:1432.3px;font-size:19.5px;color:#04201f;transform:scaleX(0.97)">[50%]</div><div class="a" style="left:462.2px;top:1430.2px;width:23.5px;height:21.5px;background:#b586ea;border:1.8px solid #b9b2c6"></div><div class="t" style="left:466.59999999999997px;top:1430.4px;font-size:21px;font-style:italic;color:#4a2a74;transform:scaleX(0.9);letter-spacing:-0.6px;-webkit-text-stroke-width:0">fx</div><div class="t" style="left:499.8px;top:1432.3px;font-size:19.5px;color:#0b1420;transform:scaleX(0.912)">DL_Vas_0013.MP4</div><div class="a" style="left:900px;top:1430.2px;width:23.5px;height:21.5px;background:#1fa021;border:1.8px solid #8fb58f"></div><div class="t" style="left:904.4px;top:1430.4px;font-size:21px;font-style:italic;color:#0b4a0b;transform:scaleX(0.9);letter-spacing:-0.6px;-webkit-text-stroke-width:0">fx</div><div class="t" style="left:937.5px;top:1432.3px;font-size:19.5px;color:#120c20;transform:scaleX(0.912)">DL_Vas_0052.MP4</div><svg style="left:444px;top:1461px;filter:saturate(0.8)" width="168" height="59" viewBox="0 0 168 59" preserveAspectRatio="none"><defs><clipPath id="c1"><rect width="168" height="59"/></clipPath><filter id="b1"><feGaussianBlur stdDeviation="0.8"/></filter><filter id="b4"><feGaussianBlur stdDeviation="2.2"/></filter></defs><g clip-path="url(#c1)"><rect width="168" height="59" fill="#353535"/><rect x="40.6" y="0" width="2" height="59" fill="#5a5a5a"/><g filter="url(#b1)"><rect x="123" y="0" width="45" height="59" fill="#b89a86"/><rect x="123" y="0" width="8" height="59" fill="#d3a698"/><rect x="131" y="0" width="9" height="59" fill="#c9a880"/><rect x="140" y="0" width="3.4" height="59" fill="#8a6a58"/><rect x="143" y="0" width="5" height="59" fill="#9a4552"/><rect x="148" y="0" width="4" height="59" fill="#5e5a58"/><rect x="152" y="0" width="3" height="59" fill="#b0923e"/><rect x="155" y="0" width="4" height="59" fill="#6f7a5c"/><rect x="159" y="0" width="9" height="59" fill="#cfc8b4"/><rect x="163.4" y="21" width="4.6" height="31" fill="#2f2a24"/><rect x="165" y="28" width="3" height="16" fill="#8a8478"/><path d="M64 59 L64 46 L69 30 L76 20 L86 14 L100 4 L112 10 L118 59 Z" fill="#2c2c2d"/><path d="M69 33 L76 21 L84 18 L92 12 L100 5 L104 8 L86 26 L78 30 L72 38 Z" fill="#9c7c6e"/><path d="M64 0 L96 0 L96 6 L90 13 L84 20 L76 18 L72 14 L70 10 L66 7 Z" fill="#96786a"/><path d="M74 8 L82 5 L90 0 L97 0 L97 8 L90 15 L84 21 L77 19 L74 14 Z" fill="#3e322d"/><path d="M64 0 L78 0 L74 6 L67 6 Z" fill="#a98a7a"/><path d="M104 8 L86 25 L75 45" fill="none" stroke="#b8b0a8" stroke-width="0.9"/><rect x="72.6" y="42" width="2.8" height="8" fill="#8e8e8e"/><path d="M101 24 Q106 9 121 10 Q133 14 137 36 L140 59 L114 59 L109 44 Q101 34 101 24 Z" fill="#ae8d84"/><ellipse cx="122" cy="26" rx="9" ry="12" fill="#b99a92" filter="url(#b4)"/><path d="M101 24 Q104 32 109 44 L113 54 Q104 42 98 28 Z" fill="#7b6056"/><path d="M113 45.6 L137.6 40.6 L138.2 43.8 L114 49 Z" fill="#5e5552"/><path d="M115 52.6 L139 47.6 L139.6 50.8 L116 56 Z" fill="#5e5552"/></g></g></svg><svg style="left:882px;top:1461px" width="168" height="59" viewBox="0 0 168 58.6" preserveAspectRatio="none"><defs><clipPath id="c2"><rect width="168" height="58.6"/></clipPath><filter id="b2"><feGaussianBlur stdDeviation="0.7"/></filter><filter id="b3"><feGaussianBlur stdDeviation="5"/></filter><linearGradient id="g2" x1="0" x2="1"><stop offset="0" stop-color="#97979d"/><stop offset="0.3" stop-color="#8d8d93"/><stop offset="0.5" stop-color="#87878c"/><stop offset="0.7" stop-color="#878789"/><stop offset="1" stop-color="#838284"/></linearGradient></defs><g clip-path="url(#c2)"><rect width="168" height="58.6" fill="url(#g2)"/><ellipse cx="134" cy="30" rx="11" ry="15" fill="#726e70" filter="url(#b3)"/><ellipse cx="40" cy="56" rx="26" ry="10" fill="#9a9aa1" filter="url(#b3)"/><ellipse cx="112" cy="56" rx="18" ry="7" fill="#9a9a9c" filter="url(#b3)"/><g filter="url(#b2)"><rect x="45.4" y="0" width="1" height="59" fill="#77777d"/><path d="M0 0 L23.8 0 L13.1 59 L0 59 Z" fill="#1c1c1c"/><path d="M2 0 L22 0 L20 9 L2 12 Z" fill="#2b2b24"/><path d="M78 0 L82.5 0 L82.5 8 L93 10 L94 34 L90 52 L84 58.6 L77 58.6 Z" fill="#222326"/><rect x="76.4" y="0" width="1.3" height="59" fill="#5e5e62"/><path d="M82.5 31 L88 30 L87.5 50 L82.5 52 Z" fill="#23628a"/><path d="M84 15 L92 16 L92 26 L84 25 Z" fill="#35393e"/><path d="M94 0 L107 0 L110 5 L113 14 L115 26 L116 32 L113 42 L116 58.6 L107 58.6 L104 46 L101 58.6 L99 58.6 L98 48 L101 32 L100 22 L97 15 L86 13 L85 9 L95 9 L93 4 Z" fill="#212125"/><path d="M91 3 L94.5 2 L95 9 L91.5 9.5 Z" fill="#b49c90"/><path d="M84.5 9 L87 8.6 L87.4 11.4 L85 12 Z" fill="#c9b6a8"/></g></g></svg><div class="a" style="left:372px;top:1530px;width:960px;height:48.2px;background:#15704f;overflow:hidden"><svg style="left:0;top:0" width="960" height="48.2" shape-rendering="crispEdges"><path d="M0 24.2 L0 8.6 L2 8.6 L2 4.6 L8 4.6 L8 7.1 L10 7.1 L10 5.6 L12 5.6 L12 4.6 L16 4.6 L16 4.6 L20 4.6 L20 7.1 L22 7.1 L22 6.6 L24 6.6 L24 7.6 L26 7.6 L26 8.6 L30 8.6 L30 4.6 L34 4.6 L34 5.1 L38 5.1 L38 7.1 L40 7.1 L40 4.6 L42 4.6 L42 5.1 L46 5.1 L46 6.6 L50 6.6 L50 5.6 L52 5.6 L52 5.1 L54 5.1 L54 6.1 L60 6.1 L60 5.6 L64 5.6 L64 6.6 L66 6.6 L66 7.6 L70 7.6 L70 5.6 L74 5.6 L74 8.6 L76 8.6 L76 7.6 L78 7.6 L78 6.6 L82 6.6 L82 7.1 L84 7.1 L84 6.6 L88 6.6 L88 6.6 L90 6.6 L90 6.1 L94 6.1 L94 6.6 L96 6.6 L96 7.1 L102 7.1 L102 5.6 L106 5.6 L106 5.6 L112 5.6 L112 4.6 L114 4.6 L114 5.6 L118 5.6 L118 6.6 L120 6.6 L120 8.6 L124 8.6 L124 5.6 L126 5.6 L126 5.1 L130 5.1 L130 8.6 L134 8.6 L134 5.6 L140 5.6 L140 7.6 L146 7.6 L146 5.1 L148 5.1 L148 6.1 L150 6.1 L150 6.1 L154 6.1 L154 5.1 L156 5.1 L156 5.6 L160 5.6 L160 7.1 L162 7.1 L162 7.1 L166 7.1 L166 5.6 L168 5.6 L168 4.6 L172 4.6 L172 6.1 L176 6.1 L176 5.1 L178 5.1 L178 5.6 L182 5.6 L182 4.6 L186 4.6 L186 4.6 L190 4.6 L190 6.1 L192 6.1 L192 6.1 L194 6.1 L194 5.6 L200 5.6 L200 4.6 L204 4.6 L204 6.6 L206 6.6 L206 4.6 L210 4.6 L210 5.6 L212 5.6 L212 5.1 L218 5.1 L218 5.6 L222 5.6 L222 6.1 L224 6.1 L224 4.6 L228 4.6 L228 7.1 L234 7.1 L234 8.6 L236 8.6 L236 5.6 L238 5.6 L238 5.1 L244 5.1 L244 7.1 L246 7.1 L246 5.6 L248 5.6 L248 6.1 L250 6.1 L250 5.1 L252 5.1 L252 6.6 L258 6.6 L258 7.1 L262 7.1 L262 8.6 L264 8.6 L264 5.1 L266 5.1 L266 5.1 L270 5.1 L270 7.1 L274 7.1 L274 5.6 L276 5.6 L276 4.6 L282 4.6 L282 6.1 L286 6.1 L286 8.6 L290 8.6 L290 5.6 L296 5.6 L296 4.6 L300 4.6 L300 5.1 L306 5.1 L306 5.6 L308 5.6 L308 5.6 L314 5.6 L314 7.6 L320 7.6 L320 4.6 L324 4.6 L324 7.1 L326 7.1 L326 5.1 L332 5.1 L332 7.6 L336 7.6 L336 5.1 L338 5.1 L338 5.6 L340 5.6 L340 5.1 L342 5.1 L342 8.6 L344 8.6 L344 7.1 L348 7.1 L348 7.1 L352 7.1 L352 4.6 L354 4.6 L354 7.1 L358 7.1 L358 6.1 L360 6.1 L360 4.6 L362 4.6 L362 5.6 L366 5.6 L366 7.6 L368 7.6 L368 4.6 L370 4.6 L370 4.6 L372 4.6 L372 5.1 L374 5.1 L374 5.6 L380 5.6 L380 9.6 L384 9.6 L384 8.6 L388 8.6 L388 7.6 L392 7.6 L392 4.6 L396 4.6 L396 4.6 L400 4.6 L400 4.6 L406 4.6 L406 6.1 L408 6.1 L408 9.6 L410 9.6 L410 5.6 L416 5.6 L416 7.6 L418 7.6 L418 8.6 L424 8.6 L424 5.1 L428 5.1 L428 7.1 L430 7.1 L430 5.1 L434 5.1 L434 5.6 L436 5.6 L436 5.6 L438 5.6 L438 6.6 L442 6.6 L442 5.6 L444 5.6 L444 7.6 L448 7.6 L448 7.6 L450 7.6 L450 4.6 L452 4.6 L452 5.1 L454 5.1 L454 7.1 L458 7.1 L458 5.6 L460 5.6 L460 5.6 L466 5.6 L466 6.1 L468 6.1 L468 8.6 L472 8.6 L472 6.6 L474 6.6 L474 6.1 L476 6.1 L476 4.6 L478 4.6 L478 5.6 L482 5.6 L482 6.1 L484 6.1 L484 6.1 L488 6.1 L488 5.1 L490 5.1 L490 9.6 L492 9.6 L492 5.1 L494 5.1 L494 5.1 L496 5.1 L496 4.6 L498 4.6 L498 4.6 L500 4.6 L500 5.1 L506 5.1 L506 5.6 L510 5.6 L510 7.1 L512 7.1 L512 7.1 L516 7.1 L516 8.6 L520 8.6 L520 5.1 L526 5.1 L526 5.1 L528 5.1 L528 7.6 L532 7.6 L532 5.6 L534 5.6 L534 4.6 L538 4.6 L538 7.1 L544 7.1 L544 9.6 L550 9.6 L550 6.1 L552 6.1 L552 5.6 L556 5.6 L556 5.6 L560 5.6 L560 9.6 L562 9.6 L562 5.6 L564 5.6 L564 4.6 L566 4.6 L566 5.6 L568 5.6 L568 5.1 L570 5.1 L570 4.6 L572 4.6 L572 4.6 L574 4.6 L574 4.6 L576 4.6 L576 5.6 L580 5.6 L580 5.1 L586 5.1 L586 9.6 L592 9.6 L592 7.1 L596 7.1 L596 5.1 L600 5.1 L600 7.1 L602 7.1 L602 7.1 L606 7.1 L606 6.1 L612 6.1 L612 7.1 L616 7.1 L616 7.1 L618 7.1 L618 7.1 L624 7.1 L624 4.6 L630 4.6 L630 5.6 L632 5.6 L632 5.6 L634 5.6 L634 4.6 L638 4.6 L638 5.1 L644 5.1 L644 5.6 L648 5.6 L648 7.1 L650 7.1 L650 4.6 L654 4.6 L654 6.6 L660 6.6 L660 6.1 L662 6.1 L662 6.1 L668 6.1 L668 6.6 L674 6.6 L674 6.1 L678 6.1 L678 8.6 L682 8.6 L682 7.1 L684 7.1 L684 5.1 L686 5.1 L686 5.6 L688 5.6 L688 6.1 L692 6.1 L692 5.6 L696 5.6 L696 5.1 L702 5.1 L702 5.6 L708 5.6 L708 4.6 L712 4.6 L712 4.6 L716 4.6 L716 5.6 L720 5.6 L720 6.6 L722 6.6 L722 5.1 L724 5.1 L724 6.1 L726 6.1 L726 5.6 L732 5.6 L732 7.1 L734 7.1 L734 4.6 L738 4.6 L738 5.6 L744 5.6 L744 5.1 L748 5.1 L748 9.6 L750 9.6 L750 5.1 L754 5.1 L754 5.6 L758 5.6 L758 6.1 L760 6.1 L760 6.6 L762 6.6 L762 7.6 L764 7.6 L764 5.6 L770 5.6 L770 6.2 L772 6.2 L772 6.2 L776 6.2 L776 5.8 L778 5.8 L778 8.9 L784 8.9 L784 6.1 L788 6.1 L788 10.7 L792 10.7 L792 5.3 L796 5.3 L796 7.0 L802 7.0 L802 9.2 L808 9.2 L808 7.3 L812 7.3 L812 7.0 L814 7.0 L814 8.0 L818 8.0 L818 7.7 L822 7.7 L822 7.3 L828 7.3 L828 7.5 L832 7.5 L832 7.1 L836 7.1 L836 7.7 L838 7.7 L838 7.3 L840 7.3 L840 9.3 L842 9.3 L842 8.9 L846 8.9 L846 8.0 L848 8.0 L848 8.6 L850 8.6 L850 7.2 L856 7.2 L856 11.8 L858 11.8 L858 7.4 L864 7.4 L864 9.1 L866 9.1 L866 9.7 L868 9.7 L868 8.2 L872 8.2 L872 8.8 L874 8.8 L874 9.4 L876 9.4 L876 9.0 L878 9.0 L878 11.5 L880 11.5 L880 9.6 L884 9.6 L884 9.7 L886 9.7 L886 9.3 L890 9.3 L890 9.9 L892 9.9 L892 10.5 L894 10.5 L894 8.5 L898 8.5 L898 10.2 L902 10.2 L902 9.3 L904 9.3 L904 10.3 L906 10.3 L906 9.9 L908 9.9 L908 10.5 L910 10.5 L910 11.5 L912 11.5 L912 10.1 L914 10.1 L914 10.1 L916 10.1 L916 11.1 L918 11.1 L918 10.1 L922 10.1 L922 14.1 L926 14.1 L926 12.1 L928 12.1 L928 13.1 L930 13.1 L930 11.1 L932 11.1 L932 14.1 L936 14.1 L936 13.1 L938 13.1 L938 11.1 L940 11.1 L940 10.6 L942 10.6 L942 9.1 L944 9.1 L944 10.1 L946 10.1 L946 11.1 L948 11.1 L948 11.1 L950 11.1 L950 10.1 L952 10.1 L952 10.1 L954 10.1 L954 9.6 L956 9.6 L956 9.6 L962 9.6 L960 24.2 Z" fill="#2bd69b"/><path d="M0 48.2 L0 28.6 L4 28.6 L4 28.6 L6 28.6 L6 29.6 L10 29.6 L10 33.6 L12 33.6 L12 29.6 L14 29.6 L14 28.6 L16 28.6 L16 30.1 L18 30.1 L18 30.6 L22 30.6 L22 30.6 L26 30.6 L26 29.6 L30 29.6 L30 29.6 L32 29.6 L32 31.1 L38 31.1 L38 29.6 L40 29.6 L40 28.6 L44 28.6 L44 29.1 L48 29.1 L48 28.6 L50 28.6 L50 30.6 L54 30.6 L54 31.6 L56 31.6 L56 28.6 L58 28.6 L58 29.6 L60 29.6 L60 31.6 L66 31.6 L66 29.6 L68 29.6 L68 31.6 L72 31.6 L72 28.6 L78 28.6 L78 29.6 L80 29.6 L80 29.6 L82 29.6 L82 29.1 L84 29.1 L84 29.6 L86 29.6 L86 28.6 L90 28.6 L90 29.1 L94 29.1 L94 28.6 L98 28.6 L98 28.6 L104 28.6 L104 29.1 L106 29.1 L106 31.6 L110 31.6 L110 28.6 L112 28.6 L112 31.1 L114 31.1 L114 32.6 L116 32.6 L116 32.6 L120 32.6 L120 28.6 L124 28.6 L124 31.1 L126 31.1 L126 28.6 L130 28.6 L130 28.6 L132 28.6 L132 31.6 L134 31.6 L134 30.1 L138 30.1 L138 30.6 L140 30.6 L140 29.6 L146 29.6 L146 29.6 L148 29.6 L148 29.6 L152 29.6 L152 31.1 L154 31.1 L154 28.6 L158 28.6 L158 29.6 L164 29.6 L164 33.6 L168 33.6 L168 28.6 L170 28.6 L170 30.6 L172 30.6 L172 29.6 L176 29.6 L176 29.6 L182 29.6 L182 32.6 L184 32.6 L184 28.6 L186 28.6 L186 30.6 L190 30.6 L190 30.1 L194 30.1 L194 29.1 L196 29.1 L196 30.6 L202 30.6 L202 30.6 L204 30.6 L204 29.1 L210 29.1 L210 29.1 L212 29.1 L212 29.6 L214 29.6 L214 28.6 L216 28.6 L216 29.6 L220 29.6 L220 33.6 L222 33.6 L222 30.1 L228 30.1 L228 30.1 L234 30.1 L234 29.1 L238 29.1 L238 29.1 L242 29.1 L242 29.1 L244 29.1 L244 29.1 L248 29.1 L248 31.6 L250 31.6 L250 33.6 L252 33.6 L252 30.6 L254 30.6 L254 29.6 L256 29.6 L256 30.6 L260 30.6 L260 29.1 L266 29.1 L266 29.6 L270 29.6 L270 29.1 L274 29.1 L274 29.6 L276 29.6 L276 29.6 L280 29.6 L280 30.6 L282 30.6 L282 29.6 L284 29.6 L284 29.6 L288 29.6 L288 28.6 L292 28.6 L292 30.1 L294 30.1 L294 28.6 L300 28.6 L300 30.6 L302 30.6 L302 31.6 L308 31.6 L308 33.6 L310 33.6 L310 30.1 L316 30.1 L316 29.6 L318 29.6 L318 31.6 L320 31.6 L320 30.1 L326 30.1 L326 31.1 L328 31.1 L328 29.6 L330 29.6 L330 29.6 L334 29.6 L334 31.1 L336 31.1 L336 29.6 L340 29.6 L340 29.6 L342 29.6 L342 30.6 L344 30.6 L344 29.6 L350 29.6 L350 30.6 L352 30.6 L352 30.1 L354 30.1 L354 32.6 L360 32.6 L360 28.6 L364 28.6 L364 33.6 L366 33.6 L366 30.6 L370 30.6 L370 29.6 L372 29.6 L372 29.6 L376 29.6 L376 29.1 L378 29.1 L378 30.1 L382 30.1 L382 30.6 L384 30.6 L384 31.1 L386 31.1 L386 33.6 L392 33.6 L392 30.1 L394 30.1 L394 29.6 L396 29.6 L396 28.6 L400 28.6 L400 28.6 L402 28.6 L402 29.6 L404 29.6 L404 29.6 L406 29.6 L406 29.6 L410 29.6 L410 29.6 L414 29.6 L414 30.1 L418 30.1 L418 29.1 L420 29.1 L420 28.6 L426 28.6 L426 31.1 L428 31.1 L428 29.6 L430 29.6 L430 29.6 L432 29.6 L432 30.6 L436 30.6 L436 33.6 L440 33.6 L440 28.6 L444 28.6 L444 28.6 L446 28.6 L446 29.1 L450 29.1 L450 31.6 L452 31.6 L452 31.1 L454 31.1 L454 29.1 L456 29.1 L456 31.1 L460 31.1 L460 31.1 L466 31.1 L466 28.6 L468 28.6 L468 31.1 L470 31.1 L470 30.1 L474 30.1 L474 31.1 L478 31.1 L478 29.6 L482 29.6 L482 28.6 L484 28.6 L484 28.6 L486 28.6 L486 29.6 L488 29.6 L488 29.6 L494 29.6 L494 31.1 L500 31.1 L500 29.1 L502 29.1 L502 31.6 L504 31.6 L504 29.1 L506 29.1 L506 29.1 L512 29.1 L512 31.6 L518 31.6 L518 29.1 L522 29.1 L522 33.6 L526 33.6 L526 33.6 L532 33.6 L532 28.6 L536 28.6 L536 29.1 L538 29.1 L538 31.6 L542 31.6 L542 30.1 L546 30.1 L546 31.6 L550 31.6 L550 28.6 L552 28.6 L552 32.6 L556 32.6 L556 30.1 L558 30.1 L558 28.6 L560 28.6 L560 28.6 L566 28.6 L566 32.6 L568 32.6 L568 31.1 L570 31.1 L570 29.6 L576 29.6 L576 29.1 L578 29.1 L578 28.6 L580 28.6 L580 30.6 L586 30.6 L586 29.1 L588 29.1 L588 29.6 L590 29.6 L590 29.6 L592 29.6 L592 29.6 L594 29.6 L594 31.1 L596 31.1 L596 29.6 L600 29.6 L600 30.6 L604 30.6 L604 28.6 L606 28.6 L606 28.6 L608 28.6 L608 31.1 L612 31.1 L612 30.6 L614 30.6 L614 29.1 L616 29.1 L616 30.1 L618 30.1 L618 28.6 L620 28.6 L620 30.1 L624 30.1 L624 31.1 L628 31.1 L628 30.1 L630 30.1 L630 31.1 L632 31.1 L632 28.6 L634 28.6 L634 30.6 L640 30.6 L640 30.1 L646 30.1 L646 28.6 L652 28.6 L652 33.6 L656 33.6 L656 28.6 L658 28.6 L658 29.6 L660 29.6 L660 33.6 L664 33.6 L664 29.1 L666 29.1 L666 28.6 L670 28.6 L670 31.1 L672 31.1 L672 32.6 L674 32.6 L674 30.6 L680 30.6 L680 29.6 L682 29.6 L682 29.6 L686 29.6 L686 31.1 L690 31.1 L690 29.6 L692 29.6 L692 31.1 L694 31.1 L694 30.1 L696 30.1 L696 29.6 L702 29.6 L702 29.1 L704 29.1 L704 33.6 L706 33.6 L706 28.6 L708 28.6 L708 29.1 L710 29.1 L710 30.6 L712 30.6 L712 28.6 L714 28.6 L714 29.6 L716 29.6 L716 29.6 L720 29.6 L720 31.1 L724 31.1 L724 28.6 L730 28.6 L730 29.6 L732 29.6 L732 30.6 L734 30.6 L734 31.1 L740 31.1 L740 29.1 L746 29.1 L746 31.1 L752 31.1 L752 30.1 L758 30.1 L758 28.6 L764 28.6 L764 29.6 L768 29.6 L768 30.6 L774 30.6 L774 30.8 L776 30.8 L776 29.9 L780 29.9 L780 31.5 L784 31.5 L784 31.6 L786 31.6 L786 30.7 L788 30.7 L788 31.7 L790 31.7 L790 31.3 L792 31.3 L792 29.8 L796 29.8 L796 32.0 L802 32.0 L802 30.7 L804 30.7 L804 30.7 L810 30.7 L810 34.9 L816 34.9 L816 31.6 L818 31.6 L818 31.7 L820 31.7 L820 32.7 L826 32.7 L826 31.4 L828 31.4 L828 35.0 L832 35.0 L832 31.1 L834 31.1 L834 32.2 L838 32.2 L838 33.3 L840 33.3 L840 32.9 L842 32.9 L842 32.9 L844 32.9 L844 32.0 L850 32.0 L850 32.2 L856 32.2 L856 32.4 L858 32.4 L858 32.4 L862 32.4 L862 35.5 L868 35.5 L868 33.7 L872 33.7 L872 31.9 L874 31.9 L874 32.9 L880 32.9 L880 34.6 L882 34.6 L882 33.7 L884 33.7 L884 33.2 L886 33.2 L886 36.3 L890 36.3 L890 38.4 L896 38.4 L896 32.6 L898 32.6 L898 35.2 L904 35.2 L904 33.4 L906 33.4 L906 33.9 L910 33.9 L910 36.5 L914 36.5 L914 34.1 L918 34.1 L918 36.1 L920 36.1 L920 34.1 L924 34.1 L924 33.6 L926 33.6 L926 33.1 L932 33.1 L932 33.1 L936 33.1 L936 33.1 L940 33.1 L940 35.1 L942 35.1 L942 37.1 L944 37.1 L944 35.6 L948 35.6 L948 34.6 L950 34.6 L950 34.1 L954 34.1 L954 35.6 L956 35.6 L956 38.1 L960 38.1 L960 48.2 Z" fill="#2bd69b"/></svg></div><div class="a" style="left:390.2px;top:1536.4px;width:23.5px;height:21.5px;background:#b586ea;border:1.8px solid #b9b2c6"></div><div class="t" style="left:394.59999999999997px;top:1536.6000000000001px;font-size:21px;font-style:italic;color:#4a2a74;transform:scaleX(0.9);letter-spacing:-0.6px;-webkit-text-stroke-width:0">fx</div><div class="a" style="left:862px;top:1134px;width:2px;height:491px;background:#2d8ceb"></div><svg style="left:851.8px;top:1120px" width="24" height="28"><path d="M0 1 Q0 0 1 0 H21 Q22 0 22 1 V15.6 L13.2 23.6 H8.8 L0 15.6 Z" fill="#2d8ceb"/><rect x="10.2" y="18.3" width="2" height="5.4" fill="#05050a"/></svg><div class="a" style="left:1334px;top:1150px;width:20px;height:370px;background:#1b1b1b;border-radius:10px 10px 0 0"></div><div class="a" style="left:1334px;top:1171px;width:20px;height:337px;background:#333"></div><div class="a" style="left:1334px;top:1508px;width:20px;height:12px;background:#262626"></div><div class="a" style="left:1334px;top:1530px;width:20px;height:96px;background:#262626"></div><div class="a" style="left:1334px;top:1542px;width:20px;height:69px;background:#333"></div><div class="a" style="left:1334px;top:1161px;width:20px;height:20px;border-radius:50%;border:4px solid #9a9a9a;background:#232323"></div><div class="a" style="left:1334px;top:1498px;width:20px;height:20px;border-radius:50%;border:4px solid #9a9a9a;background:#303030"></div><div class="a" style="left:1334px;top:1532px;width:20px;height:20px;border-radius:50%;border:4px solid #9a9a9a;background:#333"></div><div class="a" style="left:1334px;top:1601px;width:20px;height:20px;border-radius:50%;border:4px solid #9a9a9a;background:#303030"></div><div class="a" style="left:-12px;top:1626px;width:1344px;height:22px;background:#1d1d1d;border-radius:11px;border:1.5px solid #2a2a2a"></div><div class="a" style="left:32px;top:1627px;width:163px;height:20px;background:#333"></div><div class="a" style="left:22.5px;top:1627px;width:20px;height:20px;border-radius:50%;border:4px solid #9a9a9a;background:#232323"></div><div class="a" style="left:185.3px;top:1627px;width:20px;height:20px;border-radius:50%;border:4px solid #9a9a9a;background:#232323"></div><div class="a" style="left:1412px;top:1054px;width:30.4px;height:553.6px;background:#050505"></div><div class="a" style="left:1413.8px;top:1073px;width:26.6px;height:532.6px;background:#1d1d1d"></div><div class="a" style="left:1413.8px;top:1056px;width:12.2px;height:16.4px;background:#f24b4b"></div><div class="a" style="left:1427.8px;top:1056px;width:12.4px;height:16.4px;background:#f24b4b"></div><div class="a" style="left:1413.8px;top:1602px;width:12.2px;height:2.2px;background:#f2f21a"></div><div class="a" style="left:1427.8px;top:1602px;width:12.4px;height:2.2px;background:#f2f21a"></div><svg style="left:0;top:0" width="1512" height="1718"><rect x="1442.4" y="1076.0" width="8" height="2" fill="#9a9a9a"/><rect x="1442.4" y="1084.8" width="4" height="2" fill="#9a9a9a"/><rect x="1442.4" y="1093.5" width="4" height="2" fill="#9a9a9a"/><rect x="1442.4" y="1102.3" width="4" height="2" fill="#9a9a9a"/><rect x="1442.4" y="1111.0" width="4" height="2" fill="#9a9a9a"/><rect x="1442.4" y="1119.8" width="4" height="2" fill="#9a9a9a"/><rect x="1442.4" y="1128.6" width="8" height="2" fill="#9a9a9a"/><rect x="1442.4" y="1137.3" width="4" height="2" fill="#9a9a9a"/><rect x="1442.4" y="1146.1" width="4" height="2" fill="#9a9a9a"/><rect x="1442.4" y="1154.8" width="4" height="2" fill="#9a9a9a"/><rect x="1442.4" y="1163.6" width="4" height="2" fill="#9a9a9a"/><rect x="1442.4" y="1172.4" width="4" height="2" fill="#9a9a9a"/><rect x="1442.4" y="1181.1" width="8" height="2" fill="#9a9a9a"/><rect x="1442.4" y="1189.9" width="4" height="2" fill="#9a9a9a"/><rect x="1442.4" y="1198.6" width="4" height="2" fill="#9a9a9a"/><rect x="1442.4" y="1207.4" width="4" height="2" fill="#9a9a9a"/><rect x="1442.4" y="1216.2" width="4" height="2" fill="#9a9a9a"/><rect x="1442.4" y="1224.9" width="4" height="2" fill="#9a9a9a"/><rect x="1442.4" y="1233.7" width="8" height="2" fill="#9a9a9a"/><rect x="1442.4" y="1242.4" width="4" height="2" fill="#9a9a9a"/><rect x="1442.4" y="1251.2" width="4" height="2" fill="#9a9a9a"/><rect x="1442.4" y="1260.0" width="4" height="2" fill="#9a9a9a"/><rect x="1442.4" y="1268.7" width="4" height="2" fill="#9a9a9a"/><rect x="1442.4" y="1277.5" width="4" height="2" fill="#9a9a9a"/><rect x="1442.4" y="1286.2" width="8" height="2" fill="#9a9a9a"/><rect x="1442.4" y="1295.0" width="4" height="2" fill="#9a9a9a"/><rect x="1442.4" y="1303.8" width="4" height="2" fill="#9a9a9a"/><rect x="1442.4" y="1312.5" width="4" height="2" fill="#9a9a9a"/><rect x="1442.4" y="1321.3" width="4" height="2" fill="#9a9a9a"/><rect x="1442.4" y="1330.0" width="4" height="2" fill="#9a9a9a"/><rect x="1442.4" y="1338.8" width="8" height="2" fill="#9a9a9a"/><rect x="1442.4" y="1347.6" width="4" height="2" fill="#9a9a9a"/><rect x="1442.4" y="1356.3" width="4" height="2" fill="#9a9a9a"/><rect x="1442.4" y="1365.1" width="4" height="2" fill="#9a9a9a"/><rect x="1442.4" y="1373.8" width="4" height="2" fill="#9a9a9a"/><rect x="1442.4" y="1382.6" width="4" height="2" fill="#9a9a9a"/><rect x="1442.4" y="1391.4" width="8" height="2" fill="#9a9a9a"/><rect x="1442.4" y="1400.1" width="4" height="2" fill="#9a9a9a"/><rect x="1442.4" y="1408.9" width="4" height="2" fill="#9a9a9a"/><rect x="1442.4" y="1417.6" width="4" height="2" fill="#9a9a9a"/><rect x="1442.4" y="1426.4" width="4" height="2" fill="#9a9a9a"/><rect x="1442.4" y="1435.2" width="4" height="2" fill="#9a9a9a"/><rect x="1442.4" y="1443.9" width="8" height="2" fill="#9a9a9a"/><rect x="1442.4" y="1452.7" width="4" height="2" fill="#9a9a9a"/><rect x="1442.4" y="1461.4" width="4" height="2" fill="#9a9a9a"/><rect x="1442.4" y="1470.2" width="4" height="2" fill="#9a9a9a"/><rect x="1442.4" y="1479.0" width="4" height="2" fill="#9a9a9a"/><rect x="1442.4" y="1487.7" width="4" height="2" fill="#9a9a9a"/><rect x="1442.4" y="1496.5" width="8" height="2" fill="#9a9a9a"/><rect x="1442.4" y="1505.2" width="4" height="2" fill="#9a9a9a"/><rect x="1442.4" y="1514.0" width="4" height="2" fill="#9a9a9a"/><rect x="1442.4" y="1522.8" width="4" height="2" fill="#9a9a9a"/><rect x="1442.4" y="1531.5" width="4" height="2" fill="#9a9a9a"/><rect x="1442.4" y="1540.3" width="4" height="2" fill="#9a9a9a"/><rect x="1442.4" y="1549.0" width="8" height="2" fill="#9a9a9a"/><rect x="1442.4" y="1557.8" width="4" height="2" fill="#9a9a9a"/><rect x="1442.4" y="1566.6" width="4" height="2" fill="#9a9a9a"/><rect x="1442.4" y="1575.3" width="4" height="2" fill="#9a9a9a"/><rect x="1442.4" y="1584.1" width="4" height="2" fill="#9a9a9a"/><rect x="1442.4" y="1592.8" width="4" height="2" fill="#9a9a9a"/><rect x="1442.4" y="1601.6" width="8" height="2" fill="#9a9a9a"/></svg><div class="t" style="left:1457px;top:1069.8px;font-size:17.5px;color:#a2a2a2">0</div><div class="t" style="left:1457px;top:1122.4px;font-size:17.5px;color:#a2a2a2">-6</div><div class="t" style="left:1457px;top:1174.9px;font-size:17.5px;color:#a2a2a2">-12</div><div class="t" style="left:1457px;top:1227.5px;font-size:17.5px;color:#a2a2a2">-18</div><div class="t" style="left:1457px;top:1280.0px;font-size:17.5px;color:#a2a2a2">-24</div><div class="t" style="left:1457px;top:1332.6px;font-size:17.5px;color:#a2a2a2">-30</div><div class="t" style="left:1457px;top:1385.2px;font-size:17.5px;color:#a2a2a2">-36</div><div class="t" style="left:1457px;top:1437.7px;font-size:17.5px;color:#a2a2a2">-42</div><div class="t" style="left:1457px;top:1490.3px;font-size:17.5px;color:#a2a2a2">-48</div><div class="t" style="left:1457px;top:1542.8px;font-size:17.5px;color:#a2a2a2">-54</div><div class="t" style="left:1457px;top:1590.0px;font-size:17.5px;color:#a2a2a2">dB</div></div></body></html>
